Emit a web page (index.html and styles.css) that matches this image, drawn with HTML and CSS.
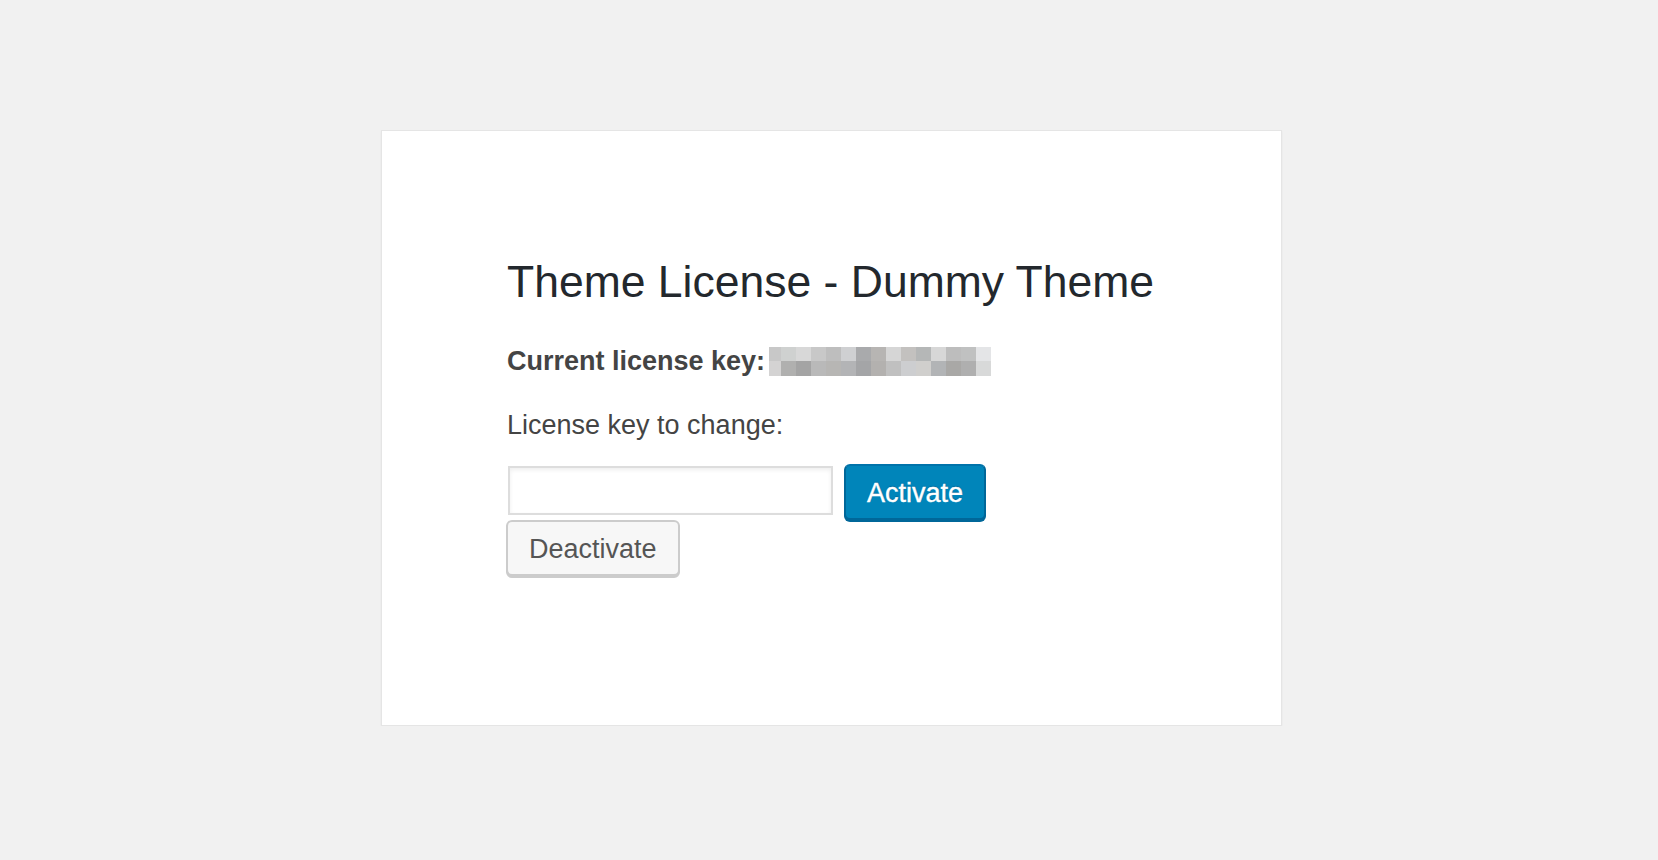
FILE: index.html
```html
<!DOCTYPE html>
<html lang="en">
<head>
<meta charset="UTF-8" />
<meta name="viewport" content="width=device-width, initial-scale=1" />
<title>Theme License</title>
<link rel="stylesheet" href="styles.css">
</head>
<body>
  <main class="license-card">
    <h1 class="license-title">Theme License - Dummy Theme</h1>

    <p class="license-current">
      <strong>Current license key:</strong>
      <span class="key-blur" aria-label="hidden license key">
        <span style="background:#c8c8c8"></span><span style="background:#cfd1d0"></span><span style="background:#d8d8d8"></span><span style="background:#c8c8c8"></span><span style="background:#bebebe"></span><span style="background:#cfd0d2"></span><span style="background:#a9aaac"></span><span style="background:#b7b5b3"></span><span style="background:#d6d6d6"></span><span style="background:#c3c1bf"></span><span style="background:#b5b7b7"></span><span style="background:#d7d7d7"></span><span style="background:#bdbdbd"></span><span style="background:#c0c1c1"></span><span style="background:#e4e5e7"></span>
        <span style="background:#d4d3d3"></span><span style="background:#b0b0af"></span><span style="background:#a4a4a4"></span><span style="background:#b9b9b9"></span><span style="background:#b7b6b4"></span><span style="background:#b3b4b6"></span><span style="background:#a4a5a7"></span><span style="background:#b3b1af"></span><span style="background:#c0c0c0"></span><span style="background:#cdced0"></span><span style="background:#d0cfcd"></span><span style="background:#b2b4b6"></span><span style="background:#a9a8a6"></span><span style="background:#afafaf"></span><span style="background:#d8d9d9"></span>
      </span>
    </p>

    <form class="license-form" onsubmit="return false;">
      <label class="license-label" for="license-key">License key to change:</label>
      <div class="license-row">
        <input type="text" id="license-key" class="license-input" />
        <button type="submit" class="btn btn-primary">Activate</button>
      </div>
      <button type="button" class="btn btn-secondary">Deactivate</button>
    </form>
  </main>
</body>
</html>
```

FILE: styles.css
```css
body {
  margin: 0;
  padding: 130px 0 0 5px;
  background: #f1f1f1;
  color: #444;
  font-family: "Liberation Sans", Arial, sans-serif;
}

.license-card {
  box-sizing: border-box;
  width: 901px;
  height: 596px;
  margin: 0 auto;
  padding: 121px 60px 0 125px;
  background: #fff;
  border: 1px solid #e5e5e5;
  box-shadow: 0 1px 2px rgba(0,0,0,0.05);
}

.license-title {
  margin: 0 0 31px;
  font-size: 44.5px;
  font-weight: 400;
  line-height: 60px;
  color: #23282d;
  white-space: nowrap;
}

.license-current {
  display: flex;
  align-items: center;
  gap: 4px;
  margin: 0 0 28px;
  font-size: 27px;
  line-height: 36px;
}

.license-current strong {
  font-weight: 700;
}

.key-blur {
  display: grid;
  grid-template-columns: 12px repeat(14, 15px);
  grid-template-rows: 14px 15px;
}

.license-form {
  margin: 0;
}

.license-label {
  display: block;
  margin-bottom: 21px;
  font-size: 27px;
  line-height: 36px;
}

.license-row {
  display: flex;
  align-items: flex-start;
  gap: 11px;
}

.license-input {
  box-sizing: border-box;
  width: 325px;
  height: 49px;
  margin: 2px 0 0 1px;
  padding: 0 8px;
  border: 2px solid #ddd;
  box-shadow: inset 0 2px 4px rgba(0,0,0,0.07);
  background: #fff;
  font: inherit;
  font-size: 26px;
  color: #32373c;
  outline: none;
}

.btn {
  box-sizing: border-box;
  height: 56px;
  padding: 2px 21px 0;
  border-radius: 6px;
  border: 2px solid;
  font-family: inherit;
  font-size: 27px;
  font-weight: 400;
  line-height: 1;
  cursor: pointer;
}

.btn-primary {
  background: #0085ba;
  border-color: #0073aa #006799 #006799;
  box-shadow: 0 2px 0 #006799;
  color: #fff;
  text-shadow: 0 -1px 1px #006799;
  -webkit-text-stroke: 0.4px #fff;
}

.btn-secondary {
  display: block;
  margin-left: -1px;
  background: #f7f7f7;
  border-color: #ccc;
  box-shadow: 0 2px 0 #ccc;
  color: #555;
}
```
